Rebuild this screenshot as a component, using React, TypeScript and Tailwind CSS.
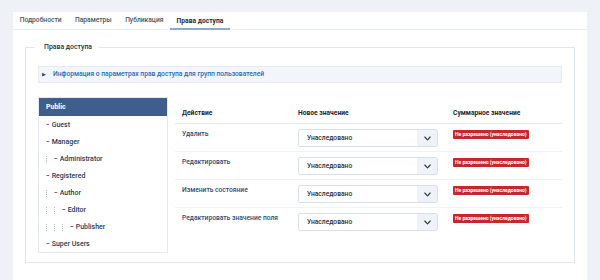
import React from "react";

const tabs = ["Подробности", "Параметры", "Публикация", "Права доступа"];

const tree: { label: string; depth: number }[] = [
  { label: "Guest", depth: 0 },
  { label: "Manager", depth: 0 },
  { label: "Administrator", depth: 1 },
  { label: "Registered", depth: 0 },
  { label: "Author", depth: 1 },
  { label: "Editor", depth: 2 },
  { label: "Publisher", depth: 3 },
  { label: "Super Users", depth: 0 },
];

const actions = ["Удалить", "Редактировать", "Изменить состояние", "Редактировать значение поля"];

function Chevron() {
  return (
    <svg width="7" height="5" viewBox="0 0 7 5" fill="none">
      <polyline points="0.8,1 3.5,3.8 6.2,1" stroke="#2b3440" strokeWidth="1.1" strokeLinecap="round" strokeLinejoin="round" />
    </svg>
  );
}

export default function App() {
  return (
    <div
      className="w-[600px] h-[280px] bg-[#eef2f6] pt-[12px] pl-[13px] overflow-hidden"
      style={{ fontFamily: "Roboto, 'Liberation Sans', sans-serif" }}
    >
      <div className="w-[574px] h-[268px] bg-white">
        <div className="flex h-[18px] border-b border-[#e6ebf1] text-[6.7px] font-medium text-[#4a5461]">
          {tabs.map((t, i) => (
            <div
              key={t}
              className={
                i === 3
                  ? "flex items-center px-[6.5px] font-bold text-[#1f2b3a] border-b-[2px] border-[#8fa8cc] -mb-px pt-[2px]"
                  : "flex items-center px-[6.7px]"
              }
            >
              {t}
            </div>
          ))}
        </div>

        <fieldset className="ml-[12px] mt-[12px] w-[550px] border border-[#dfe6ee] px-[12px] pb-[9px]">
          <legend className="ml-[-4px] pl-[10px] pr-[7px] text-[6.9px] leading-[10px] font-medium text-[#2a2f36]">
            Права доступа
          </legend>

          <div className="mt-[14px] h-[17px] bg-[#f2f5f9] border border-[#e6ebf2] flex items-center pl-[2px] text-[6.7px] font-medium text-[#2d6bb5]">
            <span className="text-[5px] text-[#2d4f7e] w-[12px] pl-[1px]">▶</span>
            <span>Информация о параметрах прав доступа для групп пользователей</span>
          </div>

          <div className="mt-[14px] flex">
            <div className="w-[130px] border border-[#e5e9ef] text-[7px] font-medium text-[#263a57]">
              <div className="h-[18px] bg-[#3e5f8e] text-white font-bold flex items-center pl-[7px]">Public</div>
              {tree.map((n) => (
                <div key={n.label} className="h-[17px] flex items-center pl-[7px] pt-[1px]">
                  {Array.from({ length: n.depth }).map((_, k) => (
                    <span key={k} className="w-[8px] h-[17px] flex items-center">
                      <span className="block h-[7px] border-l border-dotted border-[#b5bcc6]" />
                    </span>
                  ))}
                  <span>− {n.label}</span>
                </div>
              ))}
            </div>

            <div className="ml-[7px] w-[387px] text-[6.7px] font-medium">
              <div className="flex h-[27px] border-b border-[#e3e8ee] font-bold text-[#1f252d] leading-[8px]">
                <div className="w-[123px] pl-[7px] pt-[12px]">Действие</div>
                <div className="w-[155px] pt-[12px]">Новое значение</div>
                <div className="flex-1 pt-[12px]">Суммарное значение</div>
              </div>
              {actions.map((a, i) => (
                <div key={a} className={"flex h-[28px] leading-[8px]" + (i < 3 ? " border-b border-[#eef1f5]" : "")}>
                  <div className="w-[123px] pl-[7px] pt-[6px] text-[#2b4b76]">{a}</div>
                  <div className="w-[155px] pt-[5px]">
                    <div className="w-[140px] h-[18px] border border-[#d9e0e9] rounded-[2px] flex items-center overflow-hidden">
                      <span className="flex-1 pl-[8px] text-[#2a2f36]">Унаследовано</span>
                      <span className="w-[20px] h-full bg-[#eef3fa] flex items-center justify-center">
                        <Chevron />
                      </span>
                    </div>
                  </div>
                  <div className="flex-1 pt-[6px]">
                    <span className="inline-flex items-center h-[9px] px-[2px] rounded-[1px] bg-[#c5272a] text-white text-[5px] font-bold leading-none">
                      Не разрешено (унаследовано)
                    </span>
                  </div>
                </div>
              ))}
            </div>
          </div>
        </fieldset>
      </div>
    </div>
  );
}
